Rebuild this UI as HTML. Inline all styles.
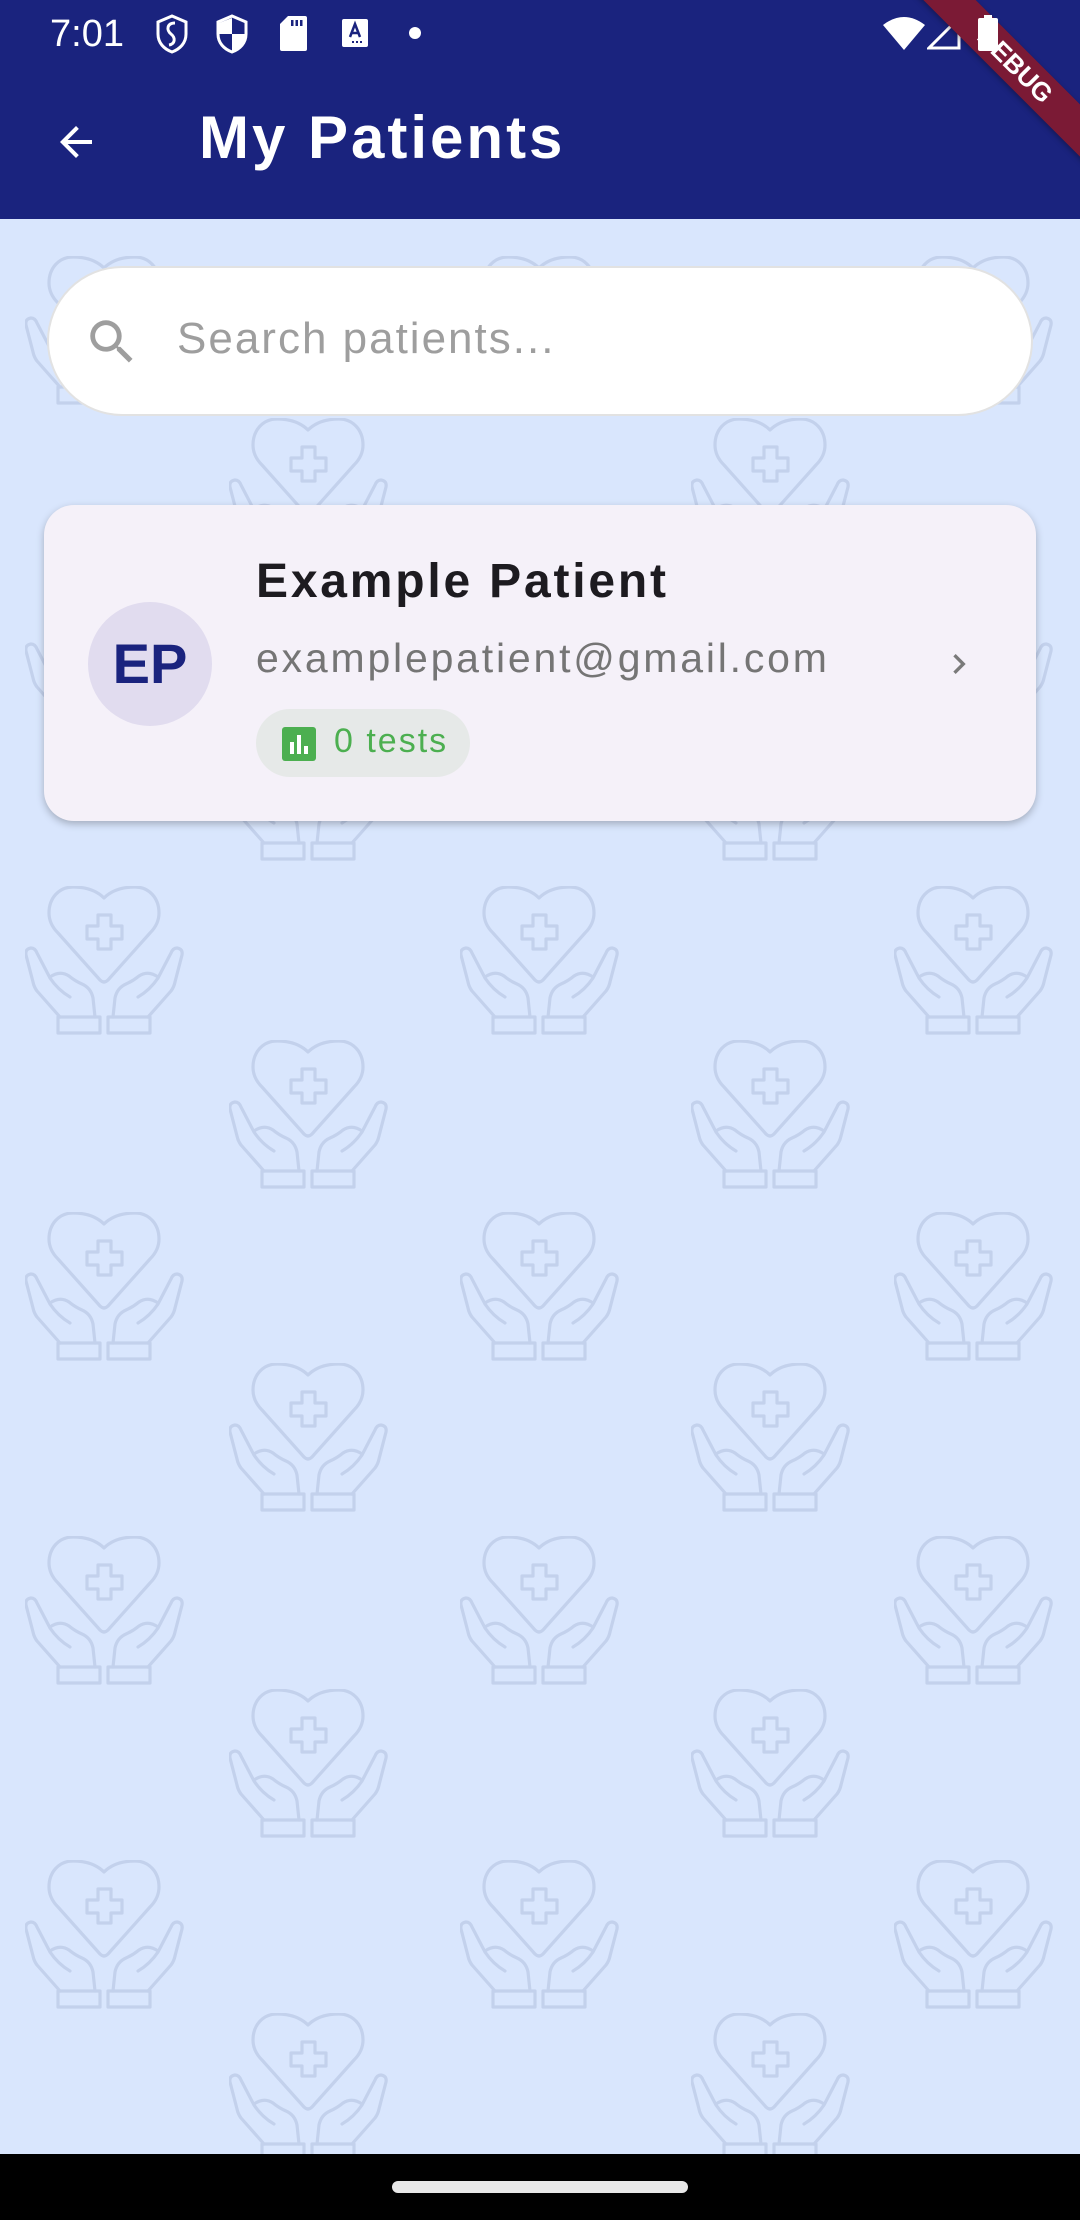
<!DOCTYPE html>
<html><head><meta charset="utf-8">
<style>
*{margin:0;padding:0;box-sizing:border-box}
html,body{width:1080px;height:2220px;overflow:hidden}
body{background:#d9e6fd;font-family:"Liberation Sans",sans-serif;position:relative}
.bar{position:absolute;left:0;top:0;width:1080px;height:219px;background:#1a237e;overflow:hidden}
.time{position:absolute;left:50px;top:13px;color:#fff;font-size:38px}
.title{position:absolute;left:199px;top:103px;color:#fff;font-size:60px;font-weight:bold;letter-spacing:3px}
.banner{position:absolute;left:865px;top:47px;width:300px;height:37px;background:#7b1a35;transform:rotate(45deg);color:#fff;font-weight:bold;font-size:26px;text-align:center;line-height:37px;box-shadow:0 2px 6px rgba(0,0,0,.3)}
.pat{position:absolute;width:160px;height:150px}
.search{position:absolute;left:47px;top:266px;width:986px;height:150px;background:#fff;border-radius:75px;border:2px solid #e2e2e2}
.ph{position:absolute;left:128px;top:46px;font-size:44px;color:#9e9e9e;letter-spacing:2px}
.card{position:absolute;left:44px;top:505px;width:992px;height:316px;background:#f5f1f9;border-radius:30px;box-shadow:0 3px 8px rgba(0,0,0,.25)}
.av{position:absolute;left:44px;top:97px;width:124px;height:124px;border-radius:50%;background:#e1dcef;color:#1a237e;font-weight:bold;font-size:56px;text-align:center;line-height:124px}
.name{position:absolute;left:212px;top:49px;font-size:48px;font-weight:bold;color:#1d1b20;letter-spacing:2.8px}
.email{position:absolute;left:212px;top:130px;font-size:41px;color:#757575;letter-spacing:2.8px}
.chip{position:absolute;left:212px;top:204px;width:214px;height:68px;border-radius:34px;background:#e6e9e8}
.chip span{position:absolute;left:78px;top:13px;font-size:34px;color:#4caf50;letter-spacing:2px}
.nav{position:absolute;left:0;top:2154px;width:1080px;height:66px;background:#000}
.pill{position:absolute;left:392px;top:27px;width:296px;height:12px;border-radius:6px;background:#e8e8e8}
</style></head><body>
<svg width="0" height="0" style="position:absolute">
<defs>
<symbol id="ic" viewBox="0 0 160 150">
<g fill="none" stroke="#c3d1ec" stroke-width="3.2" stroke-linejoin="round" stroke-linecap="round">
<path d="M79,12 C70,3 58,1 48,1 C34,1 24,12 24,27 C24,36 28,42 33,47 L75,94 Q79,98 83,94 L125,47 C130,42 134,36 134,27 C134,12 124,1 110,1 C100,1 88,3 79,12 Z"/>
<path d="M73,29 h13 v11 h11 v13 h-11 v10 h-13 v-10 h-11 v-13 h11 Z" stroke-linecap="butt"/>
<g id="h">
<path d="M35,131 L12,105 Q9,101 8,96 L1,69 Q0,63 6,62 Q10,62 12,67 L25,92 Q33,104 45,111"/>
<path d="M25,91 Q35,84 44,90 Q50,95 57,98 Q66,102 68,112 L70,131"/>
<rect x="33" y="131" width="42" height="16"/>
</g>
<use href="#h" transform="translate(158,0) scale(-1,1)"/>
</g>
</symbol>
</defs>
</svg>
<svg class="pat" style="left:25px;top:256px"><use href="#ic"/></svg>
<svg class="pat" style="left:460px;top:256px"><use href="#ic"/></svg>
<svg class="pat" style="left:894px;top:256px"><use href="#ic"/></svg>
<svg class="pat" style="left:229px;top:418px"><use href="#ic"/></svg>
<svg class="pat" style="left:691px;top:418px"><use href="#ic"/></svg>
<svg class="pat" style="left:25px;top:582px"><use href="#ic"/></svg>
<svg class="pat" style="left:460px;top:582px"><use href="#ic"/></svg>
<svg class="pat" style="left:894px;top:582px"><use href="#ic"/></svg>
<svg class="pat" style="left:229px;top:712px"><use href="#ic"/></svg>
<svg class="pat" style="left:691px;top:712px"><use href="#ic"/></svg>
<svg class="pat" style="left:25px;top:886px"><use href="#ic"/></svg>
<svg class="pat" style="left:460px;top:886px"><use href="#ic"/></svg>
<svg class="pat" style="left:894px;top:886px"><use href="#ic"/></svg>
<svg class="pat" style="left:229px;top:1040px"><use href="#ic"/></svg>
<svg class="pat" style="left:691px;top:1040px"><use href="#ic"/></svg>
<svg class="pat" style="left:25px;top:1212px"><use href="#ic"/></svg>
<svg class="pat" style="left:460px;top:1212px"><use href="#ic"/></svg>
<svg class="pat" style="left:894px;top:1212px"><use href="#ic"/></svg>
<svg class="pat" style="left:229px;top:1363px"><use href="#ic"/></svg>
<svg class="pat" style="left:691px;top:1363px"><use href="#ic"/></svg>
<svg class="pat" style="left:25px;top:1536px"><use href="#ic"/></svg>
<svg class="pat" style="left:460px;top:1536px"><use href="#ic"/></svg>
<svg class="pat" style="left:894px;top:1536px"><use href="#ic"/></svg>
<svg class="pat" style="left:229px;top:1689px"><use href="#ic"/></svg>
<svg class="pat" style="left:691px;top:1689px"><use href="#ic"/></svg>
<svg class="pat" style="left:25px;top:1860px"><use href="#ic"/></svg>
<svg class="pat" style="left:460px;top:1860px"><use href="#ic"/></svg>
<svg class="pat" style="left:894px;top:1860px"><use href="#ic"/></svg>
<svg class="pat" style="left:229px;top:2013px"><use href="#ic"/></svg>
<svg class="pat" style="left:691px;top:2013px"><use href="#ic"/></svg>

<div class="bar">
  <div class="time">7:01</div>
  <svg style="position:absolute;left:155px;top:14px" width="34" height="40" viewBox="0 0 34 40"><path d="M17,2 L31,8 V20 C31,29 25,35 17,38 C9,35 3,29 3,20 V8 Z" fill="none" stroke="#fff" stroke-width="3"/><path d="M20,9 C12,9 11,16 16,20 C21,24 20,30 14,31" fill="none" stroke="#fff" stroke-width="3"/></svg>
  <svg style="position:absolute;left:215px;top:14px" width="34" height="40" viewBox="0 0 34 40"><path d="M17,2 L31,8 V20 C31,29 25,35 17,38 C9,35 3,29 3,20 V8 Z" fill="none" stroke="#fff" stroke-width="3"/><path d="M17,4 V20 H4 V9 Z M17,20 H30 C30,28 24,34 17,37 Z" fill="#fff"/></svg>
  <svg style="position:absolute;left:280px;top:16px" width="27" height="35" viewBox="0 0 27 35"><path d="M8,0 H25 Q27,0 27,2 V33 Q27,35 25,35 H2 Q0,35 0,33 V8 Z" fill="#fff"/><rect x="11" y="4" width="2.5" height="6" fill="#1a237e"/><rect x="15.5" y="4" width="2.5" height="6" fill="#1a237e"/><rect x="20" y="4" width="2.5" height="6" fill="#1a237e"/></svg>
  <svg style="position:absolute;left:342px;top:19px" width="26" height="28" viewBox="0 0 26 28"><rect width="26" height="28" rx="2" fill="#fff"/><path d="M8,18 L13,5 L18,18 M10,14 H16" stroke="#1a237e" stroke-width="2.5" fill="none"/><rect x="10" y="22" width="2" height="2" fill="#1a237e"/><rect x="14" y="22" width="2" height="2" fill="#1a237e"/><rect x="18" y="22" width="2" height="2" fill="#1a237e"/></svg>
  <div style="position:absolute;left:409px;top:27px;width:12px;height:12px;border-radius:50%;background:#fff"></div>
  <svg style="position:absolute;left:883px;top:16px" width="42" height="34" viewBox="0 0 42 34"><path d="M0,9 Q21,-7 42,9 L21,34 Z" fill="#fff"/></svg>
  <svg style="position:absolute;left:927px;top:16px" width="34" height="34" viewBox="0 0 34 34"><path d="M32,2 V32 H2 Z" fill="none" stroke="#fff" stroke-width="3"/></svg>
  <svg style="position:absolute;left:52px;top:118px" width="48" height="48" viewBox="0 0 24 24"><path d="M20 11H7.83l5.59-5.59L12 4l-8 8 8 8 1.41-1.41L7.83 13H20v-2z" fill="#fff"/></svg>
  <div class="title">My Patients</div>
  <div class="banner">DEBUG</div>
  <svg style="position:absolute;left:977px;top:15px" width="22" height="36" viewBox="0 0 22 36"><rect x="7" y="0" width="8" height="4" fill="#fff"/><rect x="1" y="3" width="20" height="33" rx="2" fill="#fff"/></svg>
</div>

<div class="search">
  <svg style="position:absolute;left:34px;top:45px" width="58" height="58" viewBox="0 0 24 24"><path d="M15.5 14h-.79l-.28-.27A6.470 6.470 0 0 0 16 9.5 6.5 6.5 0 1 0 9.5 16c1.61 0 3.09-.59 4.230-1.57l.27.28v.79l5 4.99L20.49 19l-4.99-5zm-6 0C7.01 14 5 11.99 5 9.5S7.01 5 9.5 5 14 7.01 14 9.5 11.99 14 9.5 14z" fill="#9e9e9e"/></svg>
  <div class="ph">Search patients...</div>
</div>

<div class="card">
  <div class="av">EP</div>
  <div class="name">Example Patient</div>
  <div class="email">examplepatient@gmail.com</div>
  <div class="chip">
    <svg style="position:absolute;left:26px;top:18px" width="34" height="34" viewBox="0 0 34 34"><rect width="34" height="34" rx="3" fill="#4caf50"/><rect x="8" y="15" width="4" height="12" fill="#fff"/><rect x="15" y="8" width="4" height="19" fill="#fff"/><rect x="22" y="19" width="4" height="8" fill="#fff"/></svg>
    <span>0 tests</span>
  </div>
  <svg style="position:absolute;left:895px;top:139px" width="40" height="40" viewBox="0 0 24 24"><path d="M10 6 8.59 7.41 13.17 12l-4.58 4.59L10 18l6-6z" fill="#7a7a7a"/></svg>
</div>

<div class="nav"><div class="pill"></div></div>
</body></html>
